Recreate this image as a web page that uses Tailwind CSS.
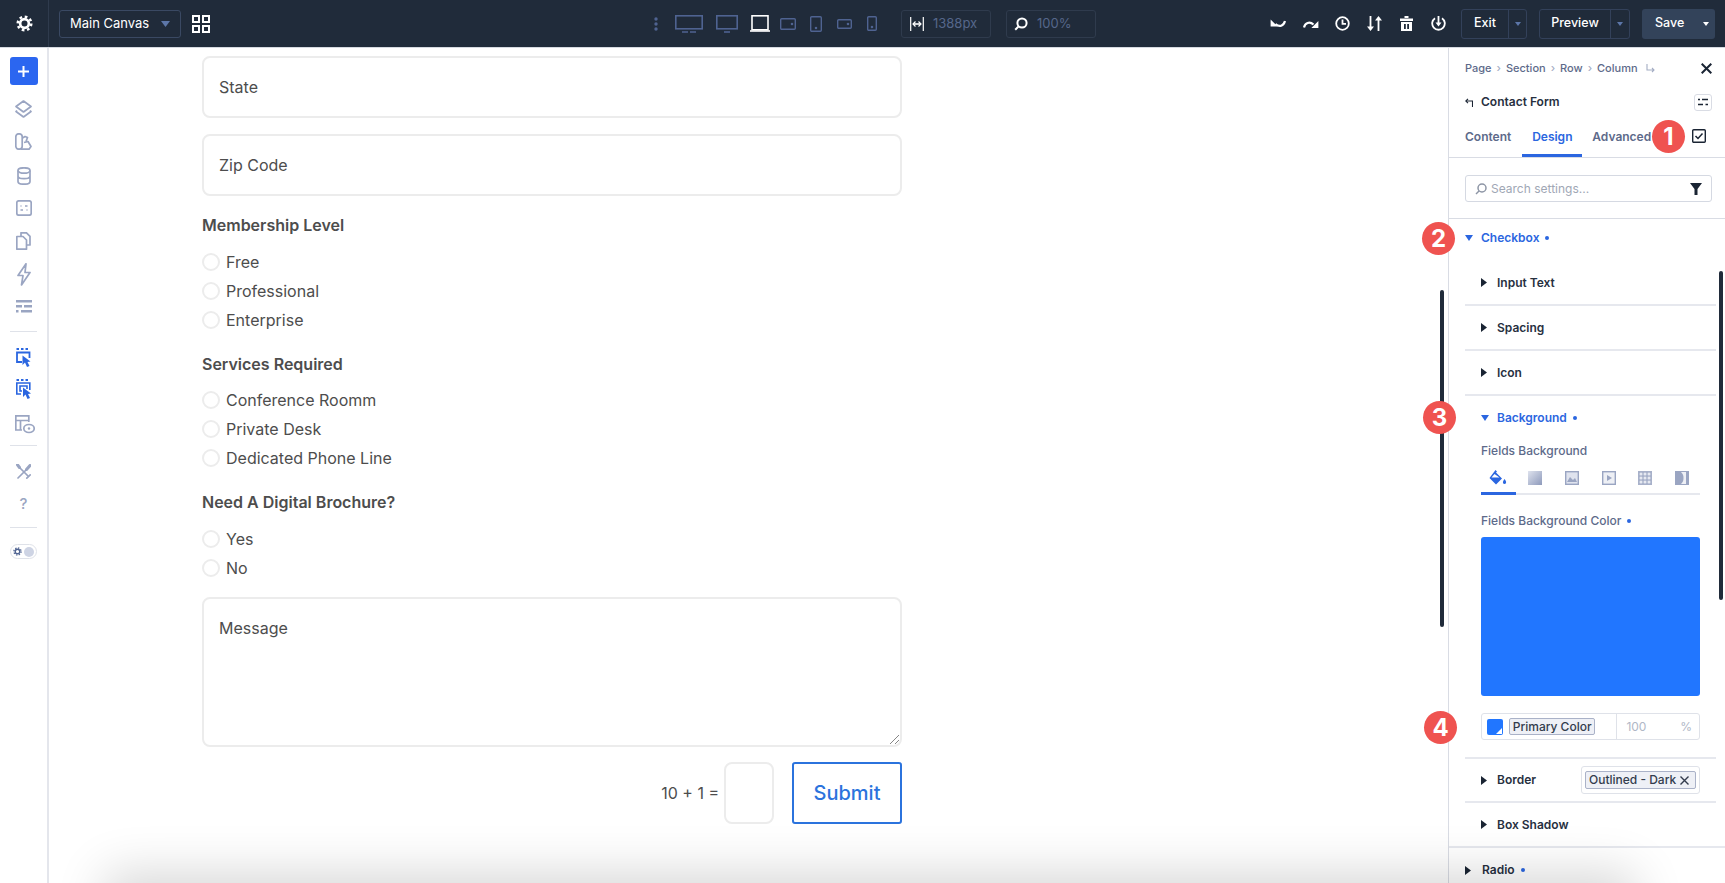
<!DOCTYPE html>
<html lang="en">
	<head>
		<meta charset="UTF-8" />
		<title>Contact Form</title>
		<script src="https://cdn.jsdelivr.net/npm/@tailwindcss/browser@4"></script>
	</head>
	<body class="relative h-screen overflow-hidden bg-white font-['Inter',sans-serif] flex flex-col">
		<!-- Top bar -->
		<header class="h-[48px] shrink-0 bg-[#202b3a] border-b border-[#d5d9e0] flex items-center text-white">
			<div class="w-[49px] h-full shrink-0 border-r border-[#2f3b4d] flex items-center justify-center">
				<svg class="w-[17px] h-[17px]" viewBox="0 0 18 18" fill="none" stroke="#fff">
					<circle cx="9" cy="9" r="4.6" stroke-width="2.8" />
					<circle cx="9" cy="9" r="7.2" stroke-width="2.6" stroke-dasharray="2.83 2.83" />
				</svg>
			</div>
			<div class="ml-[10px] w-[122px] h-[28px] rounded-[3px] border border-[#3a4963] flex items-center justify-between pl-[10px] pr-[10px] text-[13px]">
				<span>Main Canvas</span>
				<svg class="w-[9px] h-[6px]" viewBox="0 0 9 6"><path d="M0 0h9L4.5 6z" fill="#5c76a8" /></svg>
			</div>
			<svg class="ml-[11px] w-[18px] h-[18px]" viewBox="0 0 18 18" fill="none" stroke="#fff" stroke-width="2">
				<rect x="1" y="1" width="6" height="6" /><rect x="11" y="1" width="6" height="6" />
				<rect x="1" y="11" width="6" height="6" /><rect x="11" y="11" width="6" height="6" />
			</svg>

			<!-- Breakpoints -->
			<div class="ml-[444px] flex items-center text-[#4f6391]">
				<svg class="w-[4px] h-[14px]" viewBox="0 0 4 14" fill="currentColor"><circle cx="2" cy="2" r="1.7" /><circle cx="2" cy="7" r="1.7" /><circle cx="2" cy="12" r="1.7" /></svg>
				<svg class="ml-[17px] w-[28px] h-[18px]" viewBox="0 0 28 18" fill="none" stroke="currentColor" stroke-width="1.6"><rect x=".8" y=".8" width="26.4" height="13" /><path d="M7 17h6M15 17h6" /></svg>
				<svg class="ml-[13px] w-[22px] h-[18px]" viewBox="0 0 22 18" fill="none" stroke="currentColor" stroke-width="1.6"><rect x=".8" y=".8" width="20.4" height="13" /><path d="M8 17h6" /></svg>
				<svg class="ml-[12px] w-[20px] h-[17px]" viewBox="0 0 20 17" fill="none" stroke="#fff" stroke-width="1.6"><rect x="2" y=".8" width="16" height="14" /><path d="M0 16h20" /></svg>
				<svg class="ml-[10px] w-[16px] h-[12px]" viewBox="0 0 16 12" fill="none" stroke="currentColor" stroke-width="1.4"><rect x=".7" y=".7" width="14.6" height="10.6" rx="1" /><circle cx="12" cy="6" r=".6" fill="currentColor" /></svg>
				<svg class="ml-[14px] w-[12px] h-[16px]" viewBox="0 0 12 16" fill="none" stroke="currentColor" stroke-width="1.4"><rect x=".7" y=".7" width="10.6" height="14.6" rx="1" /><circle cx="6" cy="12" r=".6" fill="currentColor" /></svg>
				<svg class="ml-[15px] w-[15px] h-[10px]" viewBox="0 0 15 10" fill="none" stroke="currentColor" stroke-width="1.4"><rect x=".7" y=".7" width="13.6" height="8.6" rx="1" /><circle cx="11" cy="5" r=".6" fill="currentColor" /></svg>
				<svg class="ml-[15px] w-[10px] h-[15px]" viewBox="0 0 10 15" fill="none" stroke="currentColor" stroke-width="1.4"><rect x=".7" y=".7" width="8.6" height="13.6" rx="1" /><circle cx="5" cy="11" r=".6" fill="currentColor" /></svg>
			</div>

			<div class="ml-[24px] w-[90px] h-[28px] rounded-[3px] border border-[#2f3b4d] flex items-center pl-[8px] text-[13px] text-[#56678a]">
				<svg class="w-[14px] h-[14px]" viewBox="0 0 14 14" fill="none" stroke="#fff" stroke-width="1.2"><path d="M.7 0v14M13.3 0v14" /><path d="M3 7h8" stroke-width="1.6" /><path d="M5.5 4.5 3 7l2.500 2.500M8.500 4.500 11 7 8.500 9.500" /></svg>
				<span class="ml-[9px]">1388px</span>
			</div>
			<div class="ml-[15px] w-[90px] h-[28px] rounded-[3px] border border-[#2f3b4d] flex items-center pl-[7px] text-[13px] text-[#56678a]">
				<svg class="w-[14px] h-[14px]" viewBox="0 0 14 14" fill="none" stroke="#fff" stroke-width="2"><circle cx="8" cy="6" r="4.6" /><path d="M4.6 9.4 1.2 12.8" /></svg>
				<span class="ml-[9px]">100%</span>
			</div>

			<!-- History and actions -->
			<div class="ml-[174px] flex items-center text-white">
				<svg class="w-[16px] h-[12px]" viewBox="0 0 16 12" fill="none" stroke="currentColor" stroke-width="2.200"><path d="M15 3c-1.500 5-5.500 6.500-9.500 3" /><path d="M.6 1.500v7h7z" fill="currentColor" stroke="none" /></svg>
				<svg class="ml-[17px] w-[16px] h-[12px]" viewBox="0 0 16 12" fill="none" stroke="currentColor" stroke-width="2.200"><path d="M1 9.500c1-4.500 5.500-6.500 9.500-3" /><path d="M15.400 3v7h-7z" fill="currentColor" stroke="none" /></svg>
				<svg class="ml-[16px] w-[15px] h-[15px]" viewBox="0 0 15 15" fill="none" stroke="currentColor" stroke-width="1.8"><circle cx="7.500" cy="7.500" r="6.300" /><path d="M7.500 3.500v4.300h3.500" /></svg>
				<svg class="ml-[17px] w-[15px] h-[15px]" viewBox="0 0 15 15" fill="none" stroke="currentColor" stroke-width="1.800"><path d="M3.500 0v13M11.500 15V2" /><path d="M0 10.500h7l-3.500 4.500zM8 4.500h7L11.500 0z" fill="currentColor" stroke="none" /></svg>
				<svg class="ml-[18px] w-[13px] h-[15px]" viewBox="0 0 13 15" fill="currentColor"><path d="M0 2.500h13V5H0zM4.500 0h4v2h-4zM1 6h11v9H1z" /><path d="M4 8h1.800v5H4zM7.200 8H9v5H7.200z" fill="#202b3a" /></svg>
				<svg class="ml-[18px] w-[15px] h-[15px]" viewBox="0 0 15 15" fill="none" stroke="currentColor" stroke-width="1.800"><path d="M4 2.200a6.300 6.300 0 1 0 7 0" /><path d="M7.500 0v7" /><path d="M4.500 6.500h6l-3 4z" fill="currentColor" stroke="none" /></svg>
			</div>
			<div class="ml-[15px] w-[66px] h-[30px] rounded-[3px] border border-[#33415a] flex items-center text-[12.500px] font-medium">
				<span class="w-[46px] text-center">Exit</span>
				<span class="h-full flex-1 border-l border-[#33415a] flex items-center justify-center">
					<svg class="w-[6px] h-[4px]" viewBox="0 0 6 4"><path d="M0 0h6L3 4z" fill="#5c76a8" /></svg>
				</span>
			</div>
			<div class="ml-[12px] w-[91px] h-[30px] rounded-[3px] border border-[#33415a] flex items-center text-[12.500px] font-medium">
				<span class="w-[70px] text-center">Preview</span>
				<span class="h-full flex-1 border-l border-[#33415a] flex items-center justify-center">
					<svg class="w-[6px] h-[4px]" viewBox="0 0 6 4"><path d="M0 0h6L3 4z" fill="#5c76a8" /></svg>
				</span>
			</div>
			<div class="ml-[12px] w-[73px] h-[30px] rounded-[3px] bg-[#33435a] flex items-center text-[12.500px] font-medium">
				<span class="ml-[13px]">Save</span>
				<svg class="ml-[19px] w-[6px] h-[4px]" viewBox="0 0 6 4"><path d="M0 0h6L3 4z" fill="#fff" /></svg>
			</div>
		</header>

		<div class="flex flex-1 min-h-0">
			<!-- Left toolbar -->
			<aside class="w-[49px] shrink-0 border-r-2 border-[#e4e6ec] flex flex-col items-center text-[#9aa5c2]">
				<div class="mt-[9px] w-[28px] h-[28px] rounded-[3px] bg-[#2b66f0] flex items-center justify-center">
					<svg class="w-[11px] h-[11px]" viewBox="0 0 11 11" stroke="#fff" stroke-width="2"><path d="M5.500 0v11M0 5.500h11" /></svg>
				</div>
				<svg class="mt-[15px] w-[17px] h-[18px]" viewBox="0 0 17 18" fill="none" stroke="currentColor" stroke-width="1.700" stroke-linejoin="round"><path d="M8.500 1 16 6.500 8.500 12 1 6.500z" /><path d="M2 10.500 1 11.500 8.500 17l7.500-5.500-1-1" /></svg>
				<svg class="mt-[15px] w-[17px] h-[17px]" viewBox="0 0 17 17" fill="none" stroke="currentColor" stroke-width="1.700" stroke-linejoin="round"><rect x=".8" y=".8" width="6.400" height="15.400" rx="3" /><path d="M7.500 5 10 3.500l2.500 1-1.500 4M9 9.500l4-1 3 5-2 2.700H6" /></svg>
				<svg class="mt-[17px] w-[14px] h-[18px]" viewBox="0 0 14 18" fill="none" stroke="currentColor" stroke-width="1.700"><ellipse cx="7" cy="3.500" rx="6" ry="2.700" /><path d="M1 3.500v11c0 1.500 2.700 2.700 6 2.700s6-1.200 6-2.700v-11M1 9c0 1.500 2.700 2.700 6 2.700S13 10.500 13 9" /></svg>
				<svg class="mt-[15px] w-[16px] h-[16px]" viewBox="0 0 16 16" fill="none" stroke="currentColor" stroke-width="1.700"><rect x=".8" y=".8" width="14.400" height="14.400" rx="2" /><path d="M4.500 6h1M9 6h2.500M4.500 10H7M10.500 10h1" /></svg>
				<svg class="mt-[16px] w-[15px] h-[18px]" viewBox="0 0 15 18" fill="none" stroke="currentColor" stroke-width="1.700" stroke-linejoin="round"><path d="M5 4V.8h5.500L14 4.300V13h-3.500" /><path d="M.8 4.500H7L10.500 8v9.200H.8z" /></svg>
				<svg class="mt-[13px] w-[14px] h-[23px]" viewBox="0 0 14 23" fill="none" stroke="currentColor" stroke-width="1.700" stroke-linejoin="round"><path d="M9 .8 1 12.500h5L4.500 22 13 9.500H8z" /></svg>
				<svg class="mt-[14px] w-[16px] h-[13px]" viewBox="0 0 16 13" fill="currentColor"><path d="M0 0h16v2.500H0zM0 5h6v2.500H0zM8 5h8v2.500H8zM0 10h2.500v2.500H0zM5 10h11v2.500H5z" /></svg>
				<div class="mt-[18px] w-[27px] border-t border-[#dfe2e9]"></div>
				<svg class="mt-[16px] w-[15px] h-[20px] text-[#2b66e0]" viewBox="0 0 15 20" fill="none" stroke="currentColor" stroke-width="1.800"><path d="M.5 0h2.500v2H.5zM5 0h2.500v2H5zM9.500 0H12v2H9.500z" fill="currentColor" stroke="none" /><path d="M6 14H1V4.500h12.500V10" /><path d="M6.500 7.500v9.500l2.500-2.500 2 4.500 2.500-1-2-4 3-.5z" fill="currentColor" stroke="none" /></svg>
				<svg class="mt-[11px] w-[16px] h-[21px] text-[#2b66e0]" viewBox="0 0 16 21" fill="none" stroke="currentColor" stroke-width="1.600"><path d="M.5 0H3v2H.5zM5 0h2.500v2H5zM9.500 0H12v2H9.500z" fill="currentColor" stroke="none" /><path d="M5 15H.8V4h13v7" /><path d="M6 12H4V7h7v3" /><path d="M7 8.500v9.500l2.500-2.500 2 4.500 2.500-1-2-4 3-.5z" fill="currentColor" stroke="none" /></svg>
				<svg class="mt-[15px] w-[20px] h-[19px] ml-[3px]" viewBox="0 0 20 19" fill="none" stroke="currentColor" stroke-width="1.700"><path d="M7 15H.8V.8h13V7M.8 5.500h13M5.500 5.500V15" /><ellipse cx="14" cy="13.500" rx="5.200" ry="4" fill="#fff" /><circle cx="14" cy="13.500" r="1.200" fill="currentColor" stroke="none" /></svg>
				<div class="mt-[11px] w-[27px] border-t border-[#dfe2e9]"></div>
				<svg class="mt-[18px] w-[15px] h-[15px]" viewBox="0 0 15 15" fill="none" stroke="currentColor" stroke-width="1.700" stroke-linecap="round"><path d="M3 3l9.500 9.500" /><path d="M1.500.8 3.500 3.500" stroke-width="3" /><path d="M11 5 2 14" /><path d="M10.500 5.500 14 1.500" stroke-width="3" /><path d="M12.500 12.500l1.700-1.700M12.500 12.500l-1.700 1.700" /></svg>
				<span class="mt-[16px] text-[15px] leading-[18px] font-medium">?</span>
				<div class="mt-[14px] w-[27px] border-t border-[#dfe2e9]"></div>
				<div class="mt-[16px] w-[27px] h-[15px] rounded-full border border-[#dfe2e9] flex items-center justify-between px-[2px]">
					<svg class="w-[9px] h-[9px] text-[#4f6391]" viewBox="0 0 18 18" fill="none" stroke="currentColor"><circle cx="9" cy="9" r="4.600" stroke-width="2.800" /><circle cx="9" cy="9" r="7.200" stroke-width="2.600" stroke-dasharray="2.830 2.830" /></svg>
					<span class="w-[10px] h-[10px] rounded-full bg-[#ced4e4]"></span>
				</div>
			</aside>

			<!-- Canvas -->
			<main class="flex-1 min-w-0 pl-[153px] pt-[8px] text-[#4d4d4d] text-[16px]">
				<div class="w-[700px]">
					<div class="h-[62px] rounded-[8px] border-2 border-[#ececec] flex items-center pl-[15px]">State</div>
					<div class="mt-4 h-[62px] rounded-[8px] border-2 border-[#ececec] flex items-center pl-[15px]">Zip Code</div>

					<div class="mt-[17px] h-6 flex items-center font-semibold">Membership Level</div>
					<div class="mt-[10px] flex flex-col">
						<label class="h-[29px] flex items-center"><span class="w-[18px] h-[18px] rounded-full border-2 border-[#ececec]"></span><span class="ml-[6px]">Free</span></label>
						<label class="h-[29px] flex items-center"><span class="w-[18px] h-[18px] rounded-full border-2 border-[#ececec]"></span><span class="ml-[6px]">Professional</span></label>
						<label class="h-[29px] flex items-center"><span class="w-[18px] h-[18px] rounded-full border-2 border-[#ececec]"></span><span class="ml-[6px]">Enterprise</span></label>
					</div>

					<div class="mt-[18px] h-6 flex items-center font-semibold">Services Required</div>
					<div class="mt-[9px] flex flex-col">
						<label class="h-[29px] flex items-center"><span class="w-[18px] h-[18px] rounded-full border-2 border-[#ececec]"></span><span class="ml-[6px]">Conference Roomm</span></label>
						<label class="h-[29px] flex items-center"><span class="w-[18px] h-[18px] rounded-full border-2 border-[#ececec]"></span><span class="ml-[6px]">Private Desk</span></label>
						<label class="h-[29px] flex items-center"><span class="w-[18px] h-[18px] rounded-full border-2 border-[#ececec]"></span><span class="ml-[6px]">Dedicated Phone Line</span></label>
					</div>

					<div class="mt-[18px] h-6 flex items-center font-semibold">Need A Digital Brochure?</div>
					<div class="mt-[10px] flex flex-col">
						<label class="h-[29px] flex items-center"><span class="w-[18px] h-[18px] rounded-full border-2 border-[#ececec]"></span><span class="ml-[6px]">Yes</span></label>
						<label class="h-[29px] flex items-center"><span class="w-[18px] h-[18px] rounded-full border-2 border-[#ececec]"></span><span class="ml-[6px]">No</span></label>
					</div>

					<div class="relative mt-[15px] h-[150px] rounded-[8px] border-2 border-[#ececec] pl-[15px] pt-[17px]">
						Message
						<svg class="absolute right-[1px] bottom-[1px] w-[9px] h-[9px]" viewBox="0 0 9 9" stroke="#777" stroke-width=".9"><path d="M0 9 9 0M5 9l4-4" /></svg>
					</div>

					<div class="mt-[15px] flex items-center justify-end">
						<span>10 + 1 =</span>
						<div class="ml-[5px] w-[50px] h-[62px] rounded-[8px] border-2 border-[#ececec]"></div>
						<div class="ml-[18px] w-[110px] h-[62px] rounded-[3px] border-2 border-[#2b73dd] flex items-center justify-center text-[20px] font-medium text-[#2b73dd]">Submit</div>
					</div>
				</div>
			</main>

			<!-- Settings panel -->
			<section class="w-[277px] shrink-0 border-l border-[#d9dce4] overflow-hidden">
				<div class="h-[41px] pl-4 pr-[13px] flex items-center text-[11px] font-medium text-[#5d6a8a]">
					<span>Page</span><span class="mx-[5px] text-[#a4adc4]">›</span>
					<span>Section</span><span class="mx-[5px] text-[#a4adc4]">›</span>
					<span>Row</span><span class="mx-[5px] text-[#a4adc4]">›</span>
					<span>Column</span>
					<svg class="ml-[8px] w-[9px] h-[9px]" viewBox="0 0 9 9" fill="none" stroke="#a4adc4" stroke-width="1.100"><path d="M1 0v6h7M6 4l2 2-2 2" /></svg>
					<svg class="ml-auto w-[11px] h-[11px]" viewBox="0 0 11 11" stroke="#1a2433" stroke-width="2"><path d="M.7.700l9.600 9.600M10.300.700.700 10.300" /></svg>
				</div>
				<div class="h-[26px] pl-4 pr-[13px] flex items-center">
					<svg class="w-[8px] h-[9px]" viewBox="0 0 8 9" fill="none" stroke="#1a2433" stroke-width="1.100"><path d="M7.500 9V3H1" /><path d="M3 .8.800 3 3 5.200" /></svg>
					<span class="ml-[8px] text-[12px] font-semibold text-[#27303f]">Contact Form</span>
					<span class="ml-auto w-[18px] h-[17px] rounded-[3px] border border-[#d9dce4] flex items-center justify-center">
						<svg class="w-[10px] h-[8px]" viewBox="0 0 10 8" stroke="#1a2433" stroke-width="1.400"><path d="M0 1.500h2M4 1.500h6M0 6.500h5M7.500 6.500H10" /></svg>
					</span>
				</div>
				<div class="h-[43px] border-b border-[#d9dce4] flex items-stretch pl-4 pr-[13px] text-[12px] font-semibold text-[#5d6a8a]">
					<span class="flex items-center pt-[2px]">Content</span>
					<span class="ml-[11px] w-[60px] flex items-center justify-center pt-[5px] text-[#2b66e0] border-b-[3px] border-[#2b66e0]">Design</span>
					<span class="ml-[10px] flex items-center pt-[2px]">Advanced</span>
					<svg class="ml-auto mr-[6px] mt-[14px] w-[14px] h-[14px]" viewBox="0 0 14 14" fill="none" stroke="#1a2433"><rect x=".7" y=".7" width="12.600" height="12.600" rx="1" stroke-width="1.400" /><path d="M3.500 7 6 9.500l4.500-5" stroke-width="1.500" /></svg>
				</div>
				<div class="h-[61px] border-b border-[#d9dce4] pt-[17px] pl-4 pr-[13px]">
					<div class="h-[27px] rounded-[3px] border border-[#d5d9e2] flex items-center pl-[9px] pr-[9px] text-[12px] text-[#a0a7b5]">
						<svg class="w-[12px] h-[12px]" viewBox="0 0 12 12" fill="none" stroke="#8d95a5" stroke-width="1.500"><circle cx="7" cy="5" r="4" /><path d="M4 8 1 11" /></svg>
						<span class="ml-[4px]">Search settings...</span>
						<svg class="ml-auto w-[12px] h-[12px]" viewBox="0 0 12 12" fill="#1a2433"><path d="M0 0h12L7.500 6v6h-3V6z" /></svg>
					</div>
				</div>
				<div class="h-[38px] pl-4 flex items-center text-[12px] font-semibold text-[#2b66e0]">
					<svg class="w-[8px] h-[6px]" viewBox="0 0 8 6"><path d="M0 0h8L4 6z" fill="#2b66e0" /></svg>
					<span class="ml-[8px]">Checkbox</span>
					<span class="ml-[6px] w-[4px] h-[4px] rounded-full bg-[#2b66e0]"></span>
				</div>

				<div class="ml-4 w-[251px] text-[12px] font-semibold text-[#27303f]">
					<div class="mt-[4px] h-[45px] border-b-2 border-[#e6e8ee] pl-4 flex items-center">
						<svg class="w-[6px] h-[9px]" viewBox="0 0 6 9"><path d="M0 0l6 4.500L0 9z" fill="#1a2433" /></svg>
						<span class="ml-[10px]">Input Text</span>
					</div>
					<div class="h-[45px] border-b-2 border-[#e6e8ee] pl-4 flex items-center">
						<svg class="w-[6px] h-[9px]" viewBox="0 0 6 9"><path d="M0 0l6 4.500L0 9z" fill="#1a2433" /></svg>
						<span class="ml-[10px]">Spacing</span>
					</div>
					<div class="h-[45px] border-b-2 border-[#e6e8ee] pl-4 flex items-center">
						<svg class="w-[6px] h-[9px]" viewBox="0 0 6 9"><path d="M0 0l6 4.500L0 9z" fill="#1a2433" /></svg>
						<span class="ml-[10px]">Icon</span>
					</div>
					<div class="h-[43px] pl-4 flex items-center text-[#2b66e0]">
						<svg class="w-[8px] h-[6px]" viewBox="0 0 8 6"><path d="M0 0h8L4 6z" fill="#2b66e0" /></svg>
						<span class="ml-[8px]">Background</span>
						<span class="ml-[6px] w-[4px] h-[4px] rounded-full bg-[#2b66e0]"></span>
					</div>
					<div class="border-b-2 border-[#e6e8ee] pl-4 pr-4 pb-[17px] font-medium text-[#5d6a8a]">
						<div class="mt-[5px] h-[14px] leading-[14px]">Fields Background</div>
						<div class="mt-[8px] h-[29px] border-b-2 border-[#e6e8ee] flex text-[#9aa5c2]">
							<span class="w-[35px] -mb-[2px] flex items-center justify-center border-b-[3px] border-[#2b66e0] pb-[3px]">
								<svg class="w-[18px] h-[15px]" viewBox="0 0 18 15" fill="#2b66e0"><path d="M6.500 0l1.500 1.500-1 1 6 6-6 6-6.500-6.500zM5.500 4 2.500 7.500h8z" /><path d="M15.500 9c1 1.500 2 2.700 1.500 4a1.600 1.600 0 0 1-3 0c-.3-1.300.6-2.500 1.500-4z" /></svg>
							</span>
							<span class="ml-[1px] w-[37px] flex items-center justify-center pb-[3px]"><span class="w-[14px] h-[14px] bg-linear-to-br from-[#dfe3ee] to-[#8e9abb]"></span></span>
							<span class="w-[37px] flex items-center justify-center pb-[3px]">
								<svg class="w-[14px] h-[14px]" viewBox="0 0 14 14"><rect x=".7" y=".7" width="12.600" height="12.600" fill="#dfe3ee" stroke="#9aa5c2" stroke-width="1.400" /><path d="M2 11l3-5 3 3 2-2 2 4z" fill="#9aa5c2" /></svg>
							</span>
							<span class="w-[37px] flex items-center justify-center pb-[3px]">
								<svg class="w-[14px] h-[14px]" viewBox="0 0 14 14"><rect x=".7" y=".7" width="12.600" height="12.600" fill="#eef0f5" stroke="#9aa5c2" stroke-width="1.400" /><path d="M5 4l5 3-5 3z" fill="#9aa5c2" /></svg>
							</span>
							<span class="w-[36px] flex items-center justify-center pb-[3px]">
								<svg class="w-[14px] h-[14px]" viewBox="0 0 14 14" fill="#e6e9f1"><rect width="14" height="14" fill="#a8b1ca" /><circle cx="3" cy="3" r="1.500" /><circle cx="7" cy="3" r="1.500" /><circle cx="11" cy="3" r="1.500" /><circle cx="3" cy="7" r="1.500" /><circle cx="7" cy="7" r="1.500" /><circle cx="11" cy="7" r="1.500" /><circle cx="3" cy="11" r="1.500" /><circle cx="7" cy="11" r="1.500" /><circle cx="11" cy="11" r="1.500" /></svg>
							</span>
							<span class="w-[37px] flex items-center justify-center pb-[3px]">
								<svg class="w-[14px] h-[14px]" viewBox="0 0 14 14"><rect width="14" height="14" fill="#9aa5c2" /><path d="M6 1h5v12H6c2-2 2.500-3.500 2.500-6S8 3 6 1z" fill="#eef0f5" /></svg>
							</span>
						</div>
						<div class="mt-[19px] h-[14px] leading-[14px] flex items-center">
							<span>Fields Background Color</span>
							<span class="ml-[6px] w-[4px] h-[4px] rounded-full bg-[#2b66e0]"></span>
						</div>
						<div class="mt-[9px] h-[159px] rounded-[3px] bg-[#2176ff]"></div>
						<div class="mt-[17px] h-[27px] rounded-[3px] border border-[#dfe2e9] flex items-center pl-[5px]">
							<span class="relative w-[16px] h-[16px] rounded-[2px] bg-[#2176ff] overflow-hidden">
								<svg class="absolute right-[1px] bottom-[1px] w-[6px] h-[6px]" viewBox="0 0 6 6"><path d="M6 0v6H0z" fill="#fff" /></svg>
							</span>
							<span class="ml-[6px] w-[87px] h-[17px] rounded-[2px] border border-[#aab2c8] bg-[#eef0f6] flex items-center justify-center text-[12px] font-medium text-[#333c4d]">Primary Color</span>
							<span class="ml-[21px] h-full w-[83px] border-l border-[#dfe2e9] pl-[9px] pr-[7px] flex items-center justify-between text-[#b0b7c6] font-normal">
								<span>100</span><span>%</span>
							</span>
						</div>
					</div>
					<div class="h-[44px] border-b-2 border-[#e6e8ee] pl-4 flex items-center">
						<svg class="w-[6px] h-[9px]" viewBox="0 0 6 9"><path d="M0 0l6 4.500L0 9z" fill="#1a2433" /></svg>
						<span class="ml-[10px]">Border</span>
						<span class="ml-auto mr-[16px] w-[119px] h-[28px] shrink-0 rounded-[3px] border border-[#dfe2e9] flex items-center justify-center">
							<span class="w-[111px] h-[18px] rounded-[2px] border border-[#aab2c8] bg-[#eef0f6] flex items-center pl-[3px] text-[12px] font-medium text-[#333c4d]">
								Outlined - Dark
								<svg class="ml-[4px] w-[9px] h-[9px]" viewBox="0 0 9 9" stroke="#333c4d" stroke-width="1.400"><path d="M.5.500l8 8M8.500.500l-8 8" /></svg>
							</span>
						</span>
					</div>
					<div class="h-[43px] pl-4 flex items-center">
						<svg class="w-[6px] h-[9px]" viewBox="0 0 6 9"><path d="M0 0l6 4.500L0 9z" fill="#1a2433" /></svg>
						<span class="ml-[10px]">Box Shadow</span>
					</div>
				</div>
				<div class="h-[46px] border-t-2 border-[#e6e8ee] pl-4 flex items-center text-[12px] font-semibold text-[#27303f]">
					<svg class="w-[6px] h-[9px]" viewBox="0 0 6 9"><path d="M0 0l6 4.500L0 9z" fill="#1a2433" /></svg>
					<span class="ml-[11px]">Radio</span>
					<span class="ml-[6px] w-[4px] h-[4px] rounded-full bg-[#2b66e0]"></span>
				</div>
			</section>
		</div>

		<!-- Soft shadow rising from below the window -->
		<div class="pointer-events-none absolute left-[130px] right-[115px] top-[898px] h-[20px] shadow-[0_0_50px_25px_rgba(0,0,0,0.16)]"></div>

		<!-- Callout scrollbars -->
		<div class="absolute left-[1440px] top-[290px] w-[4px] h-[337px] rounded-full bg-[#202b3a]"></div>
		<div class="absolute left-[1719px] top-[271px] w-[4px] h-[329px] rounded-full bg-[#202b3a]"></div>

		<!-- Numbered callouts -->
		<div class="absolute left-[1652px] top-[120px] w-[33px] h-[33px] rounded-full bg-[#ef5350] text-white text-[24px] font-bold flex items-center justify-center">1</div>
		<div class="absolute left-[1422px] top-[222px] w-[33px] h-[33px] rounded-full bg-[#ef5350] text-white text-[24px] font-bold flex items-center justify-center">2</div>
		<div class="absolute left-[1423px] top-[401px] w-[33px] h-[33px] rounded-full bg-[#ef5350] text-white text-[24px] font-bold flex items-center justify-center">3</div>
		<div class="absolute left-[1424px] top-[711px] w-[33px] h-[33px] rounded-full bg-[#ef5350] text-white text-[24px] font-bold flex items-center justify-center">4</div>
	</body>
</html>
